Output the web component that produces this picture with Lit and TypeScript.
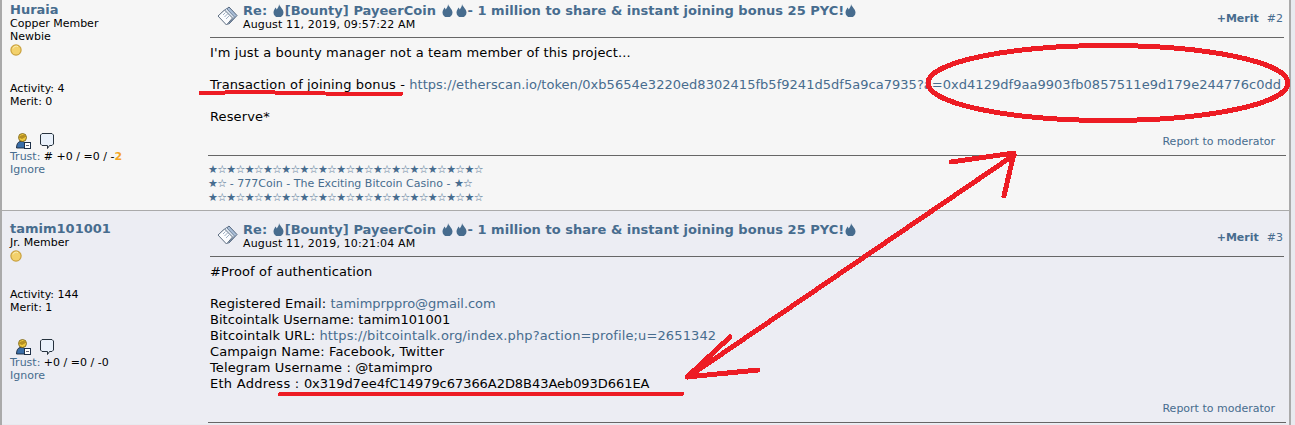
import { LitElement, html, css, svg } from "lit";
import { customElement } from "lit/decorators.js";

const drop = html`<svg class="drop" viewBox="0 0 11 13" width="11" height="13"><path d="M6 0C6.500 2.500 10.500 5 10.500 8.500a5 5 0 0 1-10 0C.5 6 2 5 2.500 3.500c.6.8.9 1.400 1.200 1.900C5 4 6.100 2 6 0z" fill="#476c8e"/></svg>`;

const docIcon = html`<svg class="doc" viewBox="0 0 21 20" width="21" height="20">
  <path d="M6 6 12 1 20 9.500 12 18z" fill="#a9bdd6" stroke="#55677e"/>
  <path d="M3.500 8 9.500 2.500 17.500 11 11 18.500z" fill="#dfe7f1" stroke="#6f8299"/>
  <path d="M1 10 7.500 4 15.500 12 9.500 19z" fill="#fbfcfe" stroke="#5f6f82"/>
  <path d="M6 9 8.500 6.500M7.500 11 11 7.500M9 13 12.500 9.500" stroke="#9fb0c4" fill="none"/>
</svg>`;

const personIcon = html`<svg viewBox="0 0 15 16" width="15" height="16">
  <path d="M.5 15c0-4 1.500-6 3.500-6.500h3c1 .3 2 1 2.500 2V15z" fill="#3a6ea8" stroke="#17263a" stroke-width=".9"/>
  <ellipse cx="6.500" cy="4.500" rx="4" ry="4" fill="#f0c93f" stroke="#6f5a18" stroke-width=".8"/>
  <path d="M2.700 4.500C4 2 8 1 10.500 3.500L6 6z" fill="#b58f22"/>
  <rect x="8.500" y="9.500" width="6" height="6" fill="#fff" stroke="#1e3048"/>
  <path d="M10 12.500h3" stroke="#667"/>
</svg>`;

const bubbleIcon = html`<svg viewBox="0 0 14 16" width="14" height="16">
  <path d="M2 .5h10L13.500 2v9L12 12.500H9.500L7.500 15.500V12.500H2L.5 11V2z" fill="#e9f1fb" stroke="#26323e"/>
</svg>`;

const coin = html`<svg class="coin" viewBox="0 0 12 12" width="12" height="12">
  <circle cx="6" cy="6" r="5.700" fill="#c9a13f"/>
  <circle cx="6" cy="6" r="4.500" fill="#f3d16b"/>
  <path d="M3 4.500A3.500 3.500 0 0 1 8 2.600" stroke="#fbeeb5" fill="none"/>
</svg>`;

@customElement("app-root")
export class AppRoot extends LitElement {
  static styles = css`
    :host { display: block; width: 1295px; height: 425px; overflow: hidden; position: relative; background: #e8eaef; font-family: "DejaVu Sans", Verdana, sans-serif; color: #000; }
    a { color: #476c8e; text-decoration: none; }
    .frame { width: 1291px; height: 425px; box-sizing: border-box; border-left: 2px solid #aaa; border-right: 2px solid #aaa; overflow: hidden; }
    .post { display: flex; box-sizing: border-box; padding-top: 10px; background: #ecedf3; border-top: 1px solid #aaa; height: 214px; }
    .post.first { padding-top: 2px; height: 210px; background: #f6f6f6; border-top: 0; }
    .poster { width: 198px; flex: none; padding-left: 8px; font-size: 11px; line-height: 13px; }
    .name { font-size: 13px; font-weight: 700; line-height: 15px; display: block; }
    .coinrow { height: 13px; display: flex; align-items: center; }
    .stats { margin-top: 26px; }
    .icons { display: flex; gap: 9px; margin-top: 23px; height: 17px; padding-top: 2px; padding-left: 6px; align-items: flex-start; }
    .content { flex: none; width: 1078px; }
    .head { display: flex; align-items: flex-start; padding: 1px 3px 6px 7px; border-bottom: 1px solid #666; margin: 0 2px; height: 28px; }
    .doc { flex: none; margin-top: 3px; }
    .titles { margin-left: 5px; flex: 1; }
    .title { font-size: 13px; font-weight: 700; line-height: 15px; white-space: nowrap; display: flex; align-items: center; letter-spacing: .03px; }
    .title a { white-space: pre; }
    .drop { flex: none; margin: 0 1px; }
    .drop + .drop { margin-left: 2px; }
    .date { font-size: 11px; line-height: 14px; letter-spacing: .16px; }
    .right { display: flex; gap: 8px; margin-top: 9px; font-size: 11px; line-height: 14px; margin-right: -2px; }
    .right b { font-weight: 700; }
    .body { font-size: 13px; line-height: 16px; margin: 7px 0 0 2px; height: 80px; white-space: pre; letter-spacing: .13px; }
    .post:not(.first) .body { height: 128px; }
    .tight { letter-spacing: .03px; }
    .narrow { letter-spacing: -.05px; }
    .wide { letter-spacing: .27px; }
    .report { font-size: 11px; line-height: 14px; text-align: right; padding-right: 11px; margin-top: 10px; padding-bottom: 6px; border-bottom: 1px solid #666; }
    .sig { font-size: 11px; line-height: 14px; margin-top: 7px; color: #476c8e; white-space: pre; }
    .stars { letter-spacing: -.7px; }
    .orange { color: #f5a623; }
    .marks { position: absolute; left: 0; top: 0; pointer-events: none; }
  `;

  private poster(name: string, rank: string[], activity: number, merit: number, trust: unknown) {
    return html`<div class="poster">
      <a class="name" href="#">${name}</a>
      ${rank.map((r) => html`<div>${r}</div>`)}
      <div class="coinrow">${coin}</div>
      <div class="stats">
        <div>Activity: ${activity}</div>
        <div>Merit: ${merit}</div>
      </div>
      <div class="icons">${personIcon}${bubbleIcon}</div>
      <div><a href="#">Trust:</a> ${trust}</div>
      <div><a href="#">Ignore</a></div>
    </div>`;
  }

  private head(date: string, num: number) {
    return html`<div class="head">
      ${docIcon}
      <div class="titles">
        <div class="title"><a href="#">Re: </a>${drop}<a href="#">[Bounty] PayeerCoin </a>${drop}${drop}<a href="#">- 1 million to share &amp; instant joining bonus 25 PYC!</a>${drop}</div>
        <div class="date">${date}</div>
      </div>
      <div class="right"><a href="#"><b>+Merit</b></a><a href="#">#${num}</a></div>
    </div>`;
  }

  render() {
    const stars = "★☆".repeat(15);
    return html`<div class="frame">
      <section class="post first">
        ${this.poster("Huraia", ["Copper Member", "Newbie"], 4, 0, html`# +0 / =0 / -<b class="orange">2</b>`)}
        <div class="content">
          ${this.head("August 11, 2019, 09:57:22 AM", 2)}
          <div class="body">I'm just a bounty manager not a team member of this project...

Transaction of joining bonus - <a class="tight" href="#">https://etherscan.io/token/0xb5654e3220ed8302415fb5f9241d5df5a9ca7935?a=0xd4129df9aa9903fb0857511e9d179e244776c0dd</a>

Reserve*</div>
          <div class="report"><a href="#">Report to moderator</a></div>
          <div class="sig"><span class="stars">${stars}</span>
<span class="stars">★☆</span> - 777Coin - The Exciting Bitcoin Casino - <span class="stars">★☆</span>
<span class="stars">${stars}</span></div>
        </div>
      </section>
      <section class="post">
        ${this.poster("tamim101001", ["Jr. Member"], 144, 1, html`+0 / =0 / -0`)}
        <div class="content">
          ${this.head("August 11, 2019, 10:21:04 AM", 3)}
          <div class="body">#Proof of authentication

Registered Email: <a class="narrow" href="#">tamimprppro@gmail.com</a>
<span class="tight">Bitcointalk Username: tamim101001</span>
Bitcointalk URL: <a href="#">https://bitcointalk.org/index.php?action=profile;u=2651342</a>
Campaign Name: Facebook, Twitter
Telegram Username : @tamimpro
<span class="wide">Eth Address : </span><span class="narrow">0x319d7ee4fC14979c67366A2D8B43Aeb093D661EA</span></div>
          <div class="report"><a href="#">Report to moderator</a></div>
        </div>
      </section>
    </div>
    <svg class="marks" width="1295" height="425" viewBox="0 0 1295 425" fill="none" stroke="#ed1c24" stroke-linecap="round" stroke-linejoin="round" shape-rendering="crispEdges">
      ${svg`
      <path stroke-width="4" d="M201 93 250 92 300 93 350 94 401 94"/>
      <path stroke-width="4" d="M280 394 682 394"/>
      <ellipse cx="1108" cy="83" rx="180" ry="37.500" stroke-width="5"/>
      <path stroke-width="5" d="M1014 155 688 377"/>
      <path stroke-width="5" d="M951 162 1014 153 1004 196"/>
      <path stroke-width="5" d="M730 337 687 377 758 370"/>
      `}
    </svg>`;
  }
}
